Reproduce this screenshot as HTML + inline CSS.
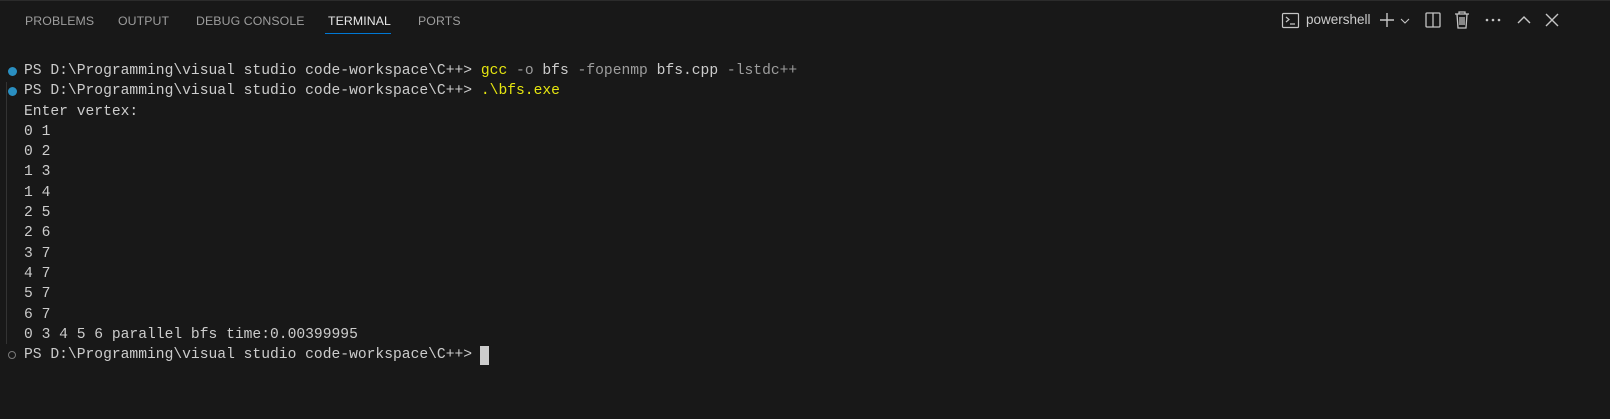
<!DOCTYPE html>
<html><head><meta charset="utf-8"><style>
body{margin:0;width:1610px;height:419px;background:#181818;overflow:hidden;position:relative;font-family:"Liberation Sans",sans-serif}
.top{position:absolute;left:0;top:0;width:1610px;height:1px;background:#2b2b2b}
.tab{position:absolute;top:14px;font-size:12.3px;color:#9d9d9d;letter-spacing:0.1px}
.act{color:#e7e7e7}
.ul{position:absolute;left:325px;top:33px;width:66px;height:1px;background:#0078d4}
.term{position:absolute;left:24px;top:61px;font-family:"Liberation Mono",monospace;font-size:14.65px;line-height:20.3px;color:#cccccc;white-space:pre}
.y{color:#e5e510}.g{color:#9d9d9d}
.dot{position:absolute;left:8px;width:9px;height:9px;border-radius:50%;background:#2a8fc1}
.odot{position:absolute;left:8px;width:6px;height:6px;border-radius:50%;border:1.5px solid #7a7a7a}
.gut{position:absolute;left:6px;top:82px;width:1px;height:262px;background:#333}
.cur{position:absolute;left:480px;top:346px;width:9px;height:19px;background:#cccccc}
svg{position:absolute}
</style></head><body>
<div class="top"></div>
<div class="tab" style="left:25px">PROBLEMS</div>
<div class="tab" style="left:118px">OUTPUT</div>
<div class="tab" style="left:196px">DEBUG CONSOLE</div>
<div class="tab act" style="left:328px">TERMINAL</div>
<div class="tab" style="left:418px">PORTS</div>
<div class="ul"></div>

<svg style="left:1281px;top:11px" width="20" height="20" viewBox="0 0 20 20" fill="none" stroke="#c5c5c5" stroke-width="1.2"><rect x="1.5" y="2.5" width="16" height="14" rx="1"/><path d="M5 6l3 2.5-3 2.5M9 13h5"/></svg>
<div style="position:absolute;left:1306px;top:12px;font-size:13.5px;color:#cccccc">powershell</div>
<svg style="left:1378px;top:11px" width="18" height="18" viewBox="0 0 18 18" stroke="#c5c5c5" stroke-width="1.4"><path d="M9 2v14M2 9h14"/></svg>
<svg style="left:1400px;top:17px" width="10" height="8" viewBox="0 0 10 8" fill="none" stroke="#c5c5c5" stroke-width="1.1"><path d="M1 2l4 4 4-4"/></svg>
<svg style="left:1424px;top:11px" width="18" height="18" viewBox="0 0 18 18" fill="none" stroke="#c5c5c5" stroke-width="1.3"><rect x="2" y="2" width="14" height="14" rx="1"/><path d="M9 2v14"/></svg>
<svg style="left:1453px;top:10px" width="18" height="20" viewBox="0 0 18 20" fill="none" stroke="#c5c5c5" stroke-width="1.3"><path d="M2 4h14M6 4V2h6v2M4 4l1 14h8l1-14M7 7v8M9 7v8M11 7v8"/></svg>
<svg style="left:1485px;top:18px" width="18" height="4" viewBox="0 0 18 4" fill="#c5c5c5"><circle cx="2" cy="2" r="1.3"/><circle cx="8" cy="2" r="1.3"/><circle cx="14" cy="2" r="1.3"/></svg>
<svg style="left:1516px;top:14px" width="16" height="12" viewBox="0 0 16 12" fill="none" stroke="#c5c5c5" stroke-width="1.4"><path d="M2 9l6-6 6 6"/></svg>
<svg style="left:1545px;top:13px" width="14" height="14" viewBox="0 0 14 14" stroke="#c5c5c5" stroke-width="1.4"><path d="M1 1l12 12M13 1L1 13"/></svg>

<div class="dot" style="top:67px"></div>
<div class="dot" style="top:87px"></div>
<div class="gut"></div>
<div class="odot" style="top:351px"></div>
<div class="term">PS D:\Programming\visual studio code-workspace\C++> <span class="y">gcc</span> <span class="g">-o</span> bfs <span class="g">-fopenmp</span> bfs.cpp <span class="g">-lstdc++</span>
PS D:\Programming\visual studio code-workspace\C++> <span class="y">.\bfs.exe</span>
Enter vertex:
0 1
0 2
1 3
1 4
2 5
2 6
3 7
4 7
5 7
6 7
0 3 4 5 6 parallel bfs time:0.00399995
PS D:\Programming\visual studio code-workspace\C++> </div>
<div class="cur"></div>
</body></html>
